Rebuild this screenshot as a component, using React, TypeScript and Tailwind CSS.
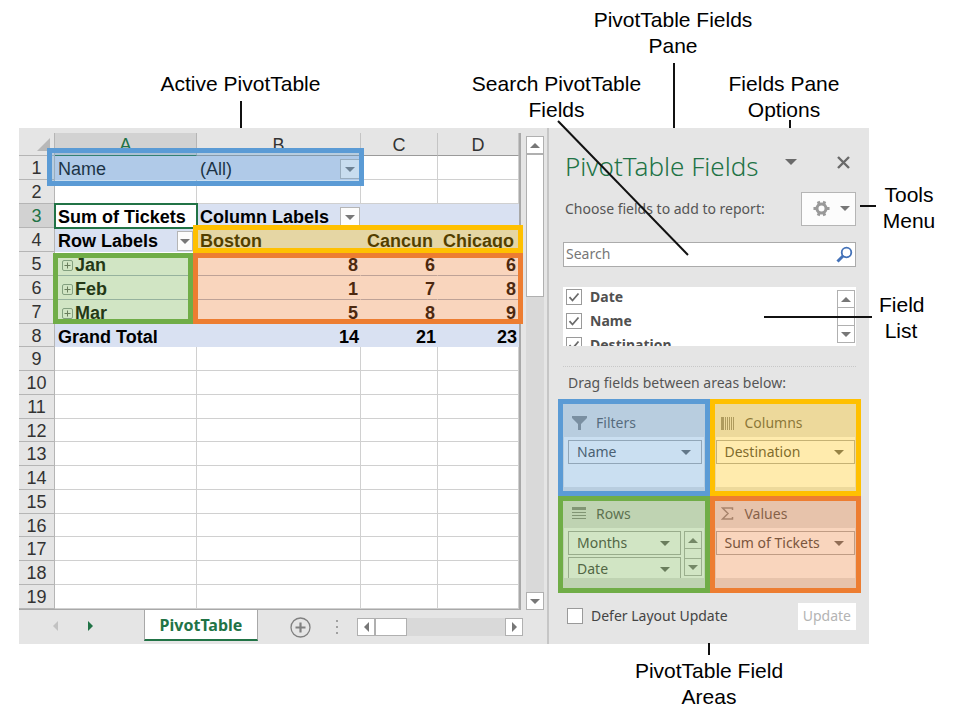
import { type ReactNode } from 'react'

const ARROW_DIR = {
  down: 'M0 0h10L5 5z',
  up: 'M0 5h10L5 0z',
  left: 'M5 0v10L0 5z',
  right: 'M0 0v10l5-5z',
}

function Arrow({ dir = 'down', className = 'text-[#777]' }: { dir?: keyof typeof ARROW_DIR; className?: string }) {
  const vertical = dir === 'down' || dir === 'up'
  return (
    <svg width={vertical ? 10 : 5} height={vertical ? 5 : 10} className={`shrink-0 ${className}`} fill="currentColor">
      <path d={ARROW_DIR[dir]} />
    </svg>
  )
}

function Check({ id, label, checked = false }: { id: string; label: string; checked?: boolean }) {
  return (
    <div className="flex h-6 shrink-0 items-center gap-2">
      <span className="grid size-4 shrink-0">
        <input
          id={id}
          type="checkbox"
          defaultChecked={checked}
          className="peer col-start-1 row-start-1 size-4 appearance-none border border-[#9a9a9a] bg-white"
        />
        <svg
          viewBox="0 0 16 16"
          className="pointer-events-none invisible col-start-1 row-start-1 size-4 peer-checked:visible"
          fill="none"
          stroke="#6a6a6a"
          strokeWidth="1.8"
        >
          <path d="M3.5 8.2 6.5 11.5 12.5 4.5" />
        </svg>
      </span>
      <label htmlFor={id} className={checked ? 'font-bold text-[#505050]' : 'text-[#444]'}>
        {label}
      </label>
    </div>
  )
}

/* ---------- worksheet ---------- */

interface Row {
  cells: string[]
  bold?: boolean
  fill?: boolean
}

const ROWS: Row[] = [
  { cells: ['Name', '(All)', '', ''] },
  { cells: ['', '', '', ''] },
  { cells: ['Sum of Tickets', 'Column Labels', '', ''], bold: true, fill: true },
  { cells: ['Row Labels', 'Boston', 'Cancun', 'Chicago'], bold: true, fill: true },
  { cells: ['Jan', '8', '6', '6'], bold: true },
  { cells: ['Feb', '1', '7', '8'], bold: true },
  { cells: ['Mar', '5', '8', '9'], bold: true },
  { cells: ['Grand Total', '14', '21', '23'], bold: true, fill: true },
  ...Array.from({ length: 11 }, () => ({ cells: ['', '', '', ''] })),
]

const FILTER_CELLS = ['1B', '3B', '4A']
const COLUMNS = ['A', 'B', 'C', 'D']

function Expand() {
  return (
    <svg width="11" height="11" fill="none" stroke="#8d9a9a" className="mr-[2px] inline-block">
      <rect x="0.5" y="0.5" width="10" height="10" rx="1.5" />
      <path d="M2.5 5.5h6M5.5 2.5v6" stroke="#666" />
    </svg>
  )
}

function Cell({ row, col, value }: { row: number; col: number; value: string }) {
  const { bold, fill } = ROWS[row - 1]
  const name = `${row}${COLUMNS[col]}`
  const isNumber = /^\d+$/.test(value)
  const shaded = fill || (row === 1 && col < 2)
  let align = 'justify-between pl-[3px]'
  if (isNumber) align = 'justify-end pr-[2px]'
  else if (row === 4 && col > 1) align = 'justify-end pr-[5px]'

  let surface = 'border-r border-b border-[#d0d0d0] bg-white'
  if (name === '3A') surface = 'bg-white outline-2 -outline-offset-1 outline-[#217346]'
  else if (shaded) surface = 'bg-[#d9e1f2]'
  else if (bold) surface = 'border-r border-b border-r-white border-b-[#a9b4c8] bg-white'

  return (
    <td className={`p-0 ${bold ? 'font-bold' : ''} ${surface}`}>
      <div className={`flex h-[22px] items-center pt-[2px] ${align}`}>
        <span className="whitespace-nowrap">
          {row > 4 && row < 8 && col === 0 && <span className="pl-1"><Expand /></span>}
          {value}
        </span>
        {FILTER_CELLS.includes(name) && (
          <button
            aria-label={`Filter ${value}`}
            className={`flex h-5 items-center justify-center border border-[#b5b5b5] bg-[#fcfcfc] ${
              col === 0 ? 'mr-1 w-4' : 'mr-px w-5'
            }`}
          >
            <Arrow />
          </button>
        )}
      </div>
    </td>
  )
}

function Sheet() {
  return (
    <div className="relative pt-[5px]">
      <table className="w-[502px] table-fixed border-separate border-spacing-0 border-r-2 border-b border-[#a8a8a8] text-[18px] leading-5 text-black">
        <colgroup>
          <col className="w-[36px]" />
          <col className="w-[142px]" />
          <col className="w-[164px]" />
          <col className="w-[77px]" />
          <col className="w-[81px]" />
        </colgroup>
        <thead>
          <tr className="h-[23px]">
            <th className="border-r border-b border-[#b5b5b5] p-0">
              <svg width="13" height="13" className="ml-auto mr-1" fill="#b8b8b8" aria-label="Select all">
                <path d="M13 0v13H0z" />
              </svg>
            </th>
            {COLUMNS.map((c) => (
              <th
                key={c}
                className={`border-r border-b p-0 pt-[2px] font-normal ${
                  c === 'A' ? 'border-[#b5b5b5] border-b-[#217346] bg-[#d2d2d2] text-[#217346]' : 'border-[#c4c4c4] border-b-[#9a9a9a] text-[#333]'
                }`}
              >
                {c}
              </th>
            ))}
          </tr>
        </thead>
        <tbody>
          {ROWS.map(({ cells }, i) => (
            <tr key={i} className={i > 5 && i % 4 === 3 ? 'h-[23px]' : 'h-6'}>
              <th
                scope="row"
                className={`border-r border-b border-[#b5b5b5] p-0 pt-px font-normal ${
                  i === 2 ? 'bg-[#d2d2d2] text-[#217346]' : 'text-[#333]'
                }`}
              >
                {i + 1}
              </th>
              {cells.map((value, col) => (
                <Cell key={col} row={i + 1} col={col} value={value} />
              ))}
            </tr>
          ))}
        </tbody>
      </table>

      {/* highlights drawn over the cell ranges */}
      <div className="pointer-events-none absolute top-[20px] left-[28px] h-[38px] w-[317px] border-[5px] border-[#5b9bd5] bg-[#5b9bd5]/32" />
      <div className="pointer-events-none absolute top-[97px] left-[174px] h-[28px] w-[330px] border-[5px] border-[#ffc000] bg-[#ffc000]/32" />
      <div className="pointer-events-none absolute top-[125px] left-[34px] h-[71px] w-[140px] border-[5px] border-[#70ad47] bg-[#70ad47]/32" />
      <div className="pointer-events-none absolute top-[125px] left-[174px] h-[71px] w-[330px] border-[5px] border-[#ed7d31] bg-[#ed7d31]/32" />
    </div>
  )
}

const SCROLL_BUTTON = 'flex size-[18px] shrink-0 items-center justify-center border border-[#b0b0b0] bg-white'

function SheetTabs() {
  return (
    <div className="flex h-[34px] items-start">
      <div className="flex w-[125px] items-center gap-[30px] pt-[11px] pl-[34px]">
        <button aria-label="Previous sheet"><Arrow dir="left" className="text-[#c2c2c2]" /></button>
        <button aria-label="Next sheet"><Arrow dir="right" className="text-[#217346]" /></button>
      </div>
      <button className="h-[31px] w-[114px] border-x border-b-2 border-x-[#a8a8a8] border-b-[#217346] bg-white font-['Noto_Sans',sans-serif] text-[16px] font-bold text-[#217346]">
        PivotTable
      </button>
      <button aria-label="New sheet" className="mt-[7px] ml-8">
        <svg width="21" height="21" fill="none" stroke="#808080">
          <circle cx="10.5" cy="10.5" r="9.5" strokeWidth="1.3" />
          <path d="M5.5 10.5h10M10.5 5.5v10" strokeWidth="2.2" />
        </svg>
      </button>
      <svg width="3" height="14" fill="#a0a0a0" className="mt-[10px] ml-[25px]">
        <path d="M0 0h2v2H0zM0 6h2v2H0zM0 12h2v2H0z" />
      </svg>
      <div className="mt-2 ml-[18px] flex h-[18px] w-[166px] bg-[#d9d9d9]">
        <button aria-label="Scroll left" className={SCROLL_BUTTON}><Arrow dir="left" /></button>
        <div className="w-8 border border-[#b0b0b0] bg-white" />
        <button aria-label="Scroll right" className={`${SCROLL_BUTTON} ml-auto`}><Arrow dir="right" /></button>
      </div>
    </div>
  )
}

/* ---------- fields pane ---------- */

function AreaField({ name, className = '' }: { name: string; className?: string }) {
  return (
    <button
      className={`flex h-6 shrink-0 items-center justify-between border border-[#ababab] bg-white pr-[10px] pl-2 text-left whitespace-nowrap text-[#444] ${className}`}
    >
      {name}
      <Arrow className="text-[#666]" />
    </button>
  )
}

interface AreaProps {
  title: string
  icon: ReactNode
  tone: string
  tint: string
  head: string
  children: ReactNode
}

function Area({ title, icon, tone, tint, head, children }: AreaProps) {
  return (
    <section className={`relative h-[97px] border-[5px] ${tone}`}>
      <h3 className={`flex items-center gap-2 text-[#555] ${head}`}>
        <span className="w-4">{icon}</span>
        {title}
      </h3>
      <div className="mx-px flex h-[50px] overflow-hidden bg-white pt-[3px]">{children}</div>
      <span className={`pointer-events-none absolute inset-0 ${tint}`} />
    </section>
  )
}

function Areas() {
  return (
    <div className="mr-2 ml-[9px] grid grid-cols-2">
      <Area
        title="Filters"
        tone="border-[#5b9bd5]"
        tint="bg-[#5b9bd5]/32"
        head="h-[33px] pt-[5px] pl-[9px]"
        icon={
          <svg width="15" height="14" fill="#8a8a8a">
            <path d="M0 0h15v2L9 8v6H6V8L0 2z" />
          </svg>
        }
      >
        <AreaField name="Name" className="mr-[2px] ml-1 flex-1" />
      </Area>
      <Area
        title="Columns"
        tone="border-[#ffc000]"
        tint="bg-[#ffc000]/32"
        head="h-[33px] pt-[5px] pl-[6px]"
        icon={
          <svg width="13" height="13" fill="#8a8a8a">
            <path d="M0 0h3v13H0zM4 0h1v13H4zM6 0h1v13H6zM8 0h1v13H8zM10 0h1v13h-1zM12 0h1v13h-1z" />
          </svg>
        }
      >
        <AreaField name="Destination" className="flex-1" />
      </Area>
      <Area
        title="Rows"
        tone="border-[#70ad47]"
        tint="bg-[#70ad47]/32"
        head="h-[27px] pb-[2px] pl-[9px]"
        icon={
          <svg width="14" height="13" fill="#8a8a8a">
            <path d="M0 0h14v3H0zM0 5h14v1H0zM0 8h14v1H0zM0 11h14v1H0z" />
          </svg>
        }
      >
        <div className="ml-1 flex flex-1 flex-col gap-[2px]">
          <AreaField name="Months" />
          <AreaField name="Date" />
        </div>
        <div className="mr-[2px] ml-[3px] flex h-[45px] flex-col">
          <button aria-label="Scroll rows up" className={SCROLL_BUTTON}><Arrow dir="up" /></button>
          <div className="flex-1 border-x border-[#b0b0b0] bg-white" />
          <button aria-label="Scroll rows down" className={SCROLL_BUTTON}><Arrow /></button>
        </div>
      </Area>
      <Area
        title="Values"
        tone="border-[#ed7d31]"
        tint="bg-[#ed7d31]/32"
        head="h-[27px] pb-[2px] pl-[6px]"
        icon={
          <svg width="13" height="13" fill="none" stroke="#888" strokeWidth="1.5">
            <path d="M11.5 3V1H1.5L7 6.5 1.5 12h10v-2" />
          </svg>
        }
      >
        <AreaField name="Sum of Tickets" className="flex-1" />
      </Area>
    </div>
  )
}

function FieldsPane() {
  return (
    <aside className="min-w-0 flex-1 font-['Noto_Sans',sans-serif] text-[14px] leading-5">
      <div className="pt-5 pr-[13px] pl-[14px]">
        <header className="flex h-9 items-center">
          <h2 className="pl-[2px] text-[26px] leading-9 font-light whitespace-nowrap text-[#217346]">PivotTable Fields</h2>
          <div className="ml-auto flex items-center gap-10 pr-[6px] pb-2">
            <button aria-label="Pane options">
              <svg width="12" height="6" fill="#6a6a6a">
                <path d="M0 0h12L6 6z" />
              </svg>
            </button>
            <button aria-label="Close">
              <svg width="13" height="13" fill="none" stroke="#6a6a6a" strokeWidth="2.4">
                <path d="M1 1l11 11M12 1 1 12" />
              </svg>
            </button>
          </div>
        </header>

        <div className="mt-2 flex h-[34px] items-center justify-between">
          <p className="pl-[2px] whitespace-nowrap text-[#555]">Choose fields to add to report:</p>
          <button
            aria-label="Tools"
            className="flex h-[34px] w-[55px] items-center justify-center gap-[10px] border border-[#b5b5b5] bg-[#fcfcfc] pb-[2px] pl-[5px]"
          >
            <svg width="17" height="17" viewBox="0 0 18 18" fill="none" stroke="#999">
              <circle cx="9" cy="9" r="4.8" strokeWidth="3.2" />
              <path
                d="M5.5 1.5 7 5M12.5 1.5 11 5M5.5 16.5 7 13M12.5 16.5 11 13M.5 9H4M14 9h3.5"
                strokeWidth="3.2"
              />
            </svg>
            <Arrow />
          </button>
        </div>

        <div className="mt-4 flex h-[25px] items-center border border-[#ababab] bg-white pr-[2px]">
          <input
            type="text"
            placeholder="Search"
            aria-label="Search fields"
            className="h-full min-w-0 flex-1 pb-[2px] pl-[2px] outline-none placeholder:text-[#777]"
          />
          <svg width="17" height="17" fill="none" stroke="#4472b8">
            <circle cx="10.5" cy="6.5" r="4.8" strokeWidth="1.8" />
            <path d="M7 10 1.5 15.5" strokeWidth="3" />
          </svg>
        </div>

        <div className="mt-5 flex h-[59px] justify-between overflow-hidden bg-white">
          <div className="-mt-[2px] flex flex-col pl-[3px]">
            <Check id="f-date" label="Date" checked />
            <Check id="f-name" label="Name" checked />
            <Check id="f-dest" label="Destination" checked />
          </div>
          <div className="my-[3px] mr-px flex flex-col">
            <button aria-label="Scroll fields up" className={SCROLL_BUTTON}><Arrow dir="up" /></button>
            <div className="flex-1 border-x border-[#b0b0b0] bg-white" />
            <button aria-label="Scroll fields down" className={SCROLL_BUTTON}><Arrow /></button>
          </div>
        </div>

        <div className="mt-5 border-t border-dotted border-[#c8c8c8]" />
        <p className="pt-[6px] pb-[6px] pl-[5px] whitespace-nowrap text-[#555]">Drag fields between areas below:</p>
      </div>

      <Areas />

      <div className="flex h-12 items-center justify-between pr-[13px] pb-[2px] pl-[18px]">
        <Check id="defer" label="Defer Layout Update" />
        <button disabled className="h-[27px] bg-white px-[5px] text-[#b4b4b4]">Update</button>
      </div>
    </aside>
  )
}

/* ---------- figure ---------- */

const LEADERS = [
  'M241 101V128',
  'M558 121 688 255',
  'M674 63V128',
  'M790 120V128',
  'M860 206H876',
  'M764 317H872',
  'M709 643V655',
]

export default function App() {
  return (
    <main className="relative min-h-screen bg-white font-['Liberation_Sans',Arial,sans-serif] text-[21px] leading-[26px] text-black">
      <div className="h-[71px] pt-[7px] pl-[583px]">
        <p className="w-[180px] text-center">PivotTable Fields Pane</p>
      </div>
      <div className="flex h-[57px] pl-[160px] text-center">
        <p className="w-[161px] whitespace-nowrap">Active PivotTable</p>
        <p className="ml-[145px] w-[181px]">Search PivotTable Fields</p>
        <p className="ml-[77px] w-[120px]">Fields Pane Options</p>
      </div>

      <div className="flex pl-[19px]">
        <div className="flex min-w-0 flex-1 bg-[#e5e5e5]">
          <div className="flex w-[530px] shrink-0 flex-col border-r-2 border-[#c6c6c6]">
            <div className="flex justify-between">
              <Sheet />
              <div className="mt-2 mr-[3px] flex w-[18px] flex-col bg-[#d9d9d9]">
                <button aria-label="Scroll up" className={SCROLL_BUTTON}><Arrow dir="up" /></button>
                <div className="h-[143px] border border-[#b0b0b0] bg-white" />
                <button aria-label="Scroll down" className={`${SCROLL_BUTTON} mt-auto`}><Arrow /></button>
              </div>
            </div>
            <SheetTabs />
          </div>
          <FieldsPane />
        </div>
        <div className="w-[90px] shrink-0 pt-[54px] pl-[10px] text-center">
          <p className="w-[60px]">Tools Menu</p>
          <p className="mt-[58px] w-[44px]">Field List</p>
        </div>
      </div>

      <div className="pt-[14px] pl-[629px]">
        <p className="w-[160px] text-center">PivotTable Field Areas</p>
      </div>

      <svg width="959" height="714" className="pointer-events-none absolute top-0 left-0 max-w-full" fill="none" stroke="#111" strokeWidth="2">
        {LEADERS.map((d) => (
          <path key={d} d={d} />
        ))}
      </svg>
    </main>
  )
}
